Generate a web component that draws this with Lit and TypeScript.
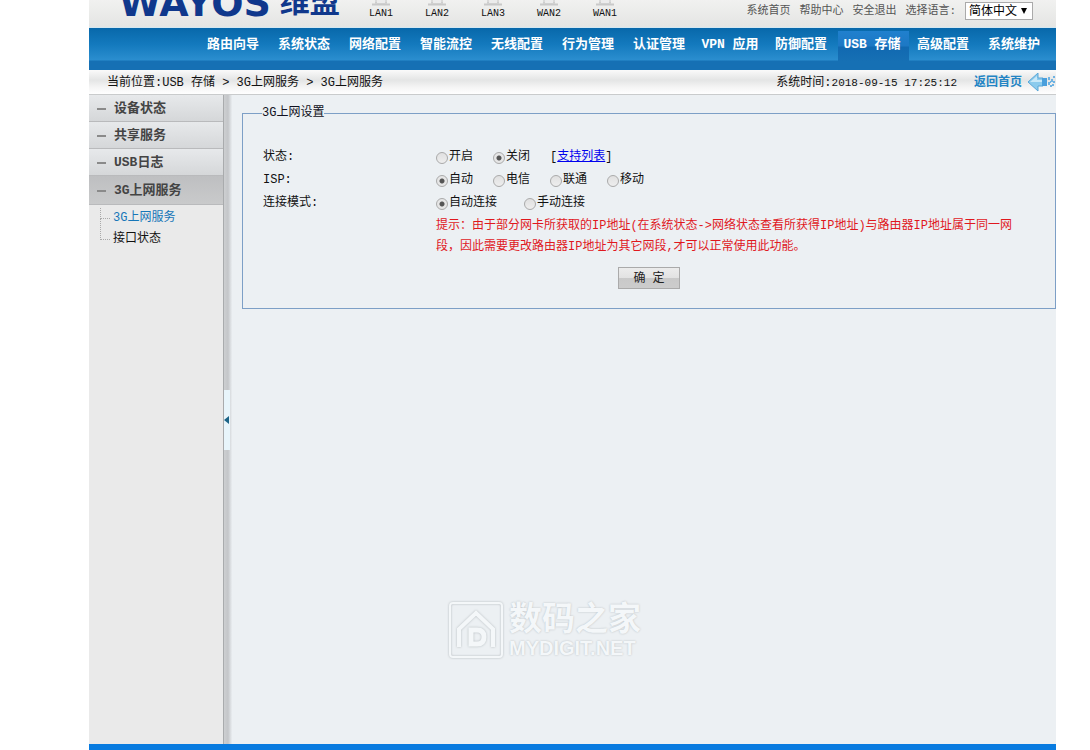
import { LitElement, html, css } from "lit";
import { customElement, state } from "lit/decorators.js";
import { classMap } from "lit/directives/class-map.js";

const PORTS = ["LAN1", "LAN2", "LAN3", "WAN2", "WAN1"];
const NAV = [
  "路由向导", "系统状态", "网络配置", "智能流控", "无线配置", "行为管理",
  "认证管理", "VPN 应用", "防御配置", "USB 存储", "高级配置", "系统维护",
];
const MENU = ["设备状态", "共享服务", "USB日志", "3G上网服务"];
const SUBMENU = ["3G上网服务", "接口状态"];

@customElement("app-root")
export class AppRoot extends LitElement {
  static styles = css`
    :host {
      display: block;
      font: 12px/20px "Liberation Mono", "Noto Sans CJK SC", monospace;
      color: #111;
      background: #fff;
    }
    a { color: inherit; text-decoration: none; }
    .page {
      display: flex;
      flex-direction: column;
      height: 100vh;
      box-sizing: border-box;
      margin: 0 34px 0 89px;
      overflow: hidden;
      border-bottom: 6px solid #087be0;
    }
    .top {
      display: flex;
      flex: none;
      height: 27px;
      overflow: hidden;
      background: linear-gradient(#f1f1f0, #e4e5e3);
      border-bottom: 1px solid #d4e8f2;
    }
    .brand {
      display: flex;
      align-items: flex-end;
      align-self: flex-end;
      gap: 9px;
      width: 242px;
      padding: 0 0 11px 30px;
      color: #10388c;
      font-weight: bold;
      white-space: nowrap;
    }
    .latin { font: bold 38px/26px "DejaVu Sans", sans-serif; }
    .hans { font-size: 30px; line-height: 24px; }
    .ports { display: flex; margin: 0 0 0 -8px; padding: 0; list-style: none; }
    .port {
      display: flex;
      flex-direction: column;
      align-items: center;
      width: 56px;
      font-size: 10px;
      line-height: 16px;
    }
    .tools {
      display: flex;
      align-items: flex-start;
      gap: 9px;
      margin-left: auto;
      padding: 2px 23px 0 0;
      color: #555;
      font-size: 11px;
      line-height: 18px;
      white-space: nowrap;
    }
    .lang { display: flex; gap: 9px; }
    .combo { position: relative; display: block; }
    .select {
      appearance: none;
      display: block;
      width: 68px;
      height: 18px;
      margin: 0;
      padding: 1px 0 0 3px;
      border: 1px solid #aaa;
      border-radius: 0;
      background: #fff;
      color: #000;
      font: inherit;
      font-size: 12px;
      line-height: 16px;
    }
    .caret {
      position: absolute;
      top: 6px;
      right: 6px;
      border: 3px solid transparent;
      border-top: 6px solid #000;
      border-bottom: 0;
      pointer-events: none;
    }
    .nav {
      display: flex;
      flex: none;
      justify-content: flex-end;
      height: 42px;
      box-sizing: border-box;
      padding: 3px 5px 0 0;
      background: linear-gradient(#0868aa, #1379bd 16px, #2b8ecf 32px, #1670b4 33px, #1670b4);
    }
    .tab {
      width: 71px;
      height: 30px;
      box-sizing: border-box;
      padding-right: 3px;
      color: #fff;
      font-size: 13px;
      font-weight: bold;
      line-height: 28px;
      text-align: center;
      white-space: nowrap;
    }
    .tab.on { background: linear-gradient(#2080ce, #1d78c4 15px, #1169b1 16px, #1670b4); }
    .crumbs {
      display: flex;
      flex: none;
      align-items: center;
      height: 24px;
      box-sizing: border-box;
      padding: 2px 1px 0 18px;
      background: linear-gradient(#fafafa, #e4e5e5 10px, #f4f4f4 17px, #fff);
      white-space: nowrap;
    }
    .clock { display: flex; margin-left: auto; }
    .time { font-size: 11px; }
    .home {
      display: flex;
      align-items: center;
      gap: 5px;
      margin-left: 17px;
      color: #2384c4;
      font-weight: bold;
    }
    .body { display: flex; flex: 1; min-height: 0; border-top: 1px solid #c9cbcc; }
    .side { flex: none; width: 134px; background: #eaeaea; }
    .item {
      display: flex;
      gap: 8px;
      align-items: center;
      height: 27px;
      box-sizing: border-box;
      padding: 2px 0 0 8px;
      border-bottom: 1px solid #b9babc;
      background: linear-gradient(#e7e9eb, #d5d7d9);
      color: #444;
      font-size: 13px;
      font-weight: bold;
    }
    .item::before { content: ""; width: 9px; height: 2px; background: #8a8a8a; }
    .item.on { height: 29px; background: linear-gradient(#bebfc1, #c9cacb); }
    .sub { margin: 3px 0 0 11px; padding: 0; list-style: none; }
    .leaf { display: flex; gap: 3px; height: 21px; line-height: 21px; }
    .branch { width: 9px; height: 10px; border: dotted #aaa; border-width: 0 0 1px 1px; }
    .leaf + .leaf .branch { height: 20px; margin-top: -10px; }
    .leaf.on { color: #1676b8; }
    .split {
      display: flex;
      flex: none;
      align-items: center;
      width: 9px;
      box-sizing: border-box;
      border-left: 1px solid #a9abad;
      background: linear-gradient(90deg, #cdcfd1, #c4c6c9 4px, #e9edf0 8px);
    }
    .grip {
      display: flex;
      align-items: center;
      width: 6px;
      height: 60px;
      padding: 0;
      border: 0;
      background: #e8f5fb;
    }
    .grip::before { content: ""; border: 4px solid transparent; border-right: 5px solid #1b6488; border-left: 0; }
    .main { position: relative; flex: 1; min-width: 0; padding: 8px 0 0 10px; background: #ecf0f3; }
    .panel { margin: 0; padding: 22px 0 19px 20px; border: 1px solid #7d9fc6; min-width: 0; }
    .legend { margin-left: -1px; padding: 0; color: #112; }
    .row { display: flex; align-items: center; min-height: 23px; }
    .name { flex: none; width: 173px; }
    .group { display: flex; gap: 20px; }
    .group.wide { gap: 27px; }
    .opt { display: flex; align-items: center; gap: 1px; }
    .radio {
      appearance: none;
      width: 12px;
      height: 12px;
      margin: 2px 0 0;
      box-sizing: border-box;
      border: 1px solid #aaa;
      border-radius: 50%;
      background: linear-gradient(#e0e0e0, #eee);
    }
    .radio:checked { background: radial-gradient(circle, #555 0 2px, #e6e6e6 3px); }
    .link { color: #00e; text-decoration: underline; }
    .tip { max-width: 584px; margin: 2px 0 0 173px; color: #e0181e; line-height: 21px; }
    .actions { display: flex; justify-content: center; padding: 9px 20px 0 0; }
    .ok {
      width: 62px;
      height: 22px;
      padding: 1px 0 0;
      border: 1px solid #aaa;
      background: linear-gradient(#ececec, #e2e2e2 50%, #c9c9c9 50%, #ccc);
      color: #222;
      font: inherit;
    }
    .mark {
      position: absolute;
      left: 50%;
      bottom: 85px;
      display: flex;
      gap: 5px;
      margin-left: -196px;
      color: #f4f7f9;
      text-shadow: 0 0 2px #b4babe;
      pointer-events: none;
    }
    .words { display: flex; flex-direction: column; font-family: "Liberation Sans", "Noto Sans CJK SC", sans-serif; white-space: nowrap; }
    .big { font-size: 33px; font-weight: bold; line-height: 36px; }
    .small { font-size: 20px; font-weight: bold; line-height: 22px; }
    .house { filter: drop-shadow(0 0 1px #b4babe); }
  `;

  @state() private menu = "3G上网服务";

  private options(name: string, items: string[], picked: string) {
    return items.map(
      (t) => html`<label class="opt"><input class="radio" type="radio" name=${name} ?checked=${t === picked} />${t}</label>`
    );
  }

  render() {
    return html`
      <div class="page">
        <header class="top">
          <div class="brand"><span class="latin">WAYOS</span><span class="hans">维盟</span></div>
          <ul class="ports">
            ${PORTS.map(
              (p) => html`<li class="port">
                <svg width="20" height="6" viewBox="0 0 20 6"><path d="M5 0v3M15 0v3M4 3h12" stroke="#c2c2c2" fill="none"/><path d="M1 3.500h18v2H1z" fill="#c9c9c9"/><path d="M6 0h8v3H6z" fill="#ececec"/></svg>
                ${p}
              </li>`
            )}
          </ul>
          <div class="tools">
            <a href="#">系统首页</a><a href="#">帮助中心</a><a href="#">安全退出</a>
            <div class="lang">
              <label for="lang">选择语言:</label>
              <span class="combo">
                <select class="select" id="lang"><option>简体中文</option></select>
                <span class="caret"></span>
              </span>
            </div>
          </div>
        </header>
        <nav class="nav">
          ${NAV.map((n) => html`<a href="#" class=${classMap({ tab: true, on: n === "USB 存储" })}>${n}</a>`)}
        </nav>
        <div class="crumbs">
          <span>当前位置:USB 存储 &gt; 3G上网服务 &gt; 3G上网服务</span>
          <span class="clock">系统时间:<time class="time">2018-09-15 17:25:12</time></span>
          <a class="home" href="#">返回首页
            <svg width="28" height="20" viewBox="0 0 28 20">
              <path d="M1 9 11 0v5h5v8h-5v5z" fill="#8ccbed" stroke="#5aa7d8"/>
              <path d="M3 9l7-6v4h5v2z" fill="#c8e8f8"/>
              <path d="M15 5h5v8h-5z" fill="#4a9fdc"/>
              <path d="M21 4h2v3h-2zM24 6h2v3h-2zM21 9h2v3h-2zM25 11h2v2h-2zM26 3h2v2h-2zM23 12h2v2h-2zM23 8h1v2h-1zM26 8h2v2h-2z" fill="#6fb3e2"/>
            </svg>
          </a>
        </div>
        <div class="body">
          <aside class="side">
            ${MENU.map(
              (m) => html`<a href="#" class=${classMap({ item: true, on: m === this.menu })} @click=${() => (this.menu = m)}>${m}</a>`
            )}
            <ul class="sub">
              ${SUBMENU.map(
                (s, i) => html`<li class=${classMap({ leaf: true, on: i === 0 })}><span class="branch"></span><a href="#">${s}</a></li>`
              )}
            </ul>
          </aside>
          <div class="split"><button class="grip" aria-label="收起"></button></div>
          <main class="main">
            <fieldset class="panel">
              <legend class="legend">3G上网设置</legend>
              <div class="row">
                <span class="name">状态:</span>
                <div class="group">
                  ${this.options("status", ["开启", "关闭"], "关闭")}
                  <span>[<a class="link" href="#">支持列表</a>]</span>
                </div>
              </div>
              <div class="row">
                <span class="name">ISP:</span>
                <div class="group">${this.options("isp", ["自动", "电信", "联通", "移动"], "自动")}</div>
              </div>
              <div class="row">
                <span class="name">连接模式:</span>
                <div class="group wide">${this.options("mode", ["自动连接", "手动连接"], "自动连接")}</div>
              </div>
              <p class="tip">提示：由于部分网卡所获取的IP地址(在系统状态-&gt;网络状态查看所获得IP地址)与路由器IP地址属于同一网段，因此需要更改路由器IP地址为其它网段,才可以正常使用此功能。</p>
              <div class="actions"><button class="ok">确 定</button></div>
            </fieldset>
            <div class="mark">
              <svg class="house" width="56" height="58" viewBox="0 0 56 58" fill="none" stroke="#f4f7f9">
                <rect x="2" y="2" width="52" height="54" rx="3" stroke-width="2"/>
                <path d="M11 46V28L28 12l17 16v18" stroke-width="4"/>
                <path d="M23 29h6q7 0 7 7t-7 7h-6z" stroke-width="5"/>
              </svg>
              <div class="words"><span class="big">数码之家</span><span class="small">MYDIGIT.NET</span></div>
            </div>
          </main>
        </div>
      </div>
    `;
  }
}
